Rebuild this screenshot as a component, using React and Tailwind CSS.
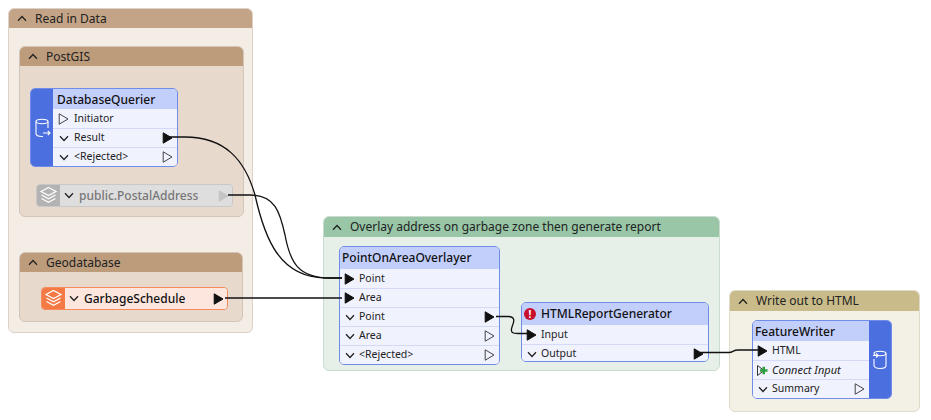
import React from "react";

const font = "font-['Noto_Sans','Open_Sans',sans-serif]";

function Chevron({ up, className = "" }) {
  return (
    <svg width="10" height="7" viewBox="0 0 10 7" className={className} fill="none" stroke="#222" strokeWidth="1.3">
      <path d={up ? "M1 5.7 L5 1.5 L9 5.7" : "M1 1.3 L5 5.5 L9 1.3"} />
    </svg>
  );
}

function Port({ filled, color = "#111" }) {
  return (
    <svg width="11" height="12" viewBox="0 0 11 12" className="shrink-0">
      <path
        d="M1.2 0.8 L10 6 L1.2 11.2 Z"
        fill={filled ? color : "#f0f2fe"}
        stroke={filled ? color : "#444"}
        strokeWidth="1"
      />
    </svg>
  );
}

function DbIcon({ writer }) {
  return (
    <svg width="17" height="20" viewBox="0 0 17 20" fill="none" stroke="#fff" strokeWidth="1.1">
      <ellipse cx="8" cy="3.5" rx="6" ry="2.2" />
      {writer ? (
        <path d="M14 3.5 V15.5 C14 17.5 11 18.5 8 18.5 C5 18.5 2 17.5 2 15.5 V9 M1 5.5 H6 M4 3.5 L6.2 5.5 L4 7.5" />
      ) : (
        <path d="M2 3.5 V15.5 C2 17.5 5 18.5 8 18.5 H9 M14 3.5 V10 M9 15 H16 M13.8 12.8 L16 15 L13.8 17.2" />
      )}
    </svg>
  );
}

function LayersIcon() {
  return (
    <svg width="19" height="19" viewBox="0 0 19 19" fill="none" stroke="#fff" strokeWidth="1.2">
      <path d="M9.5 1.5 L17 5.5 L9.5 9.5 L2 5.5 Z" />
      <path d="M2.5 9 L9.5 12.8 L16.5 9" />
      <path d="M2.5 12.5 L9.5 16.3 L16.5 12.5" />
    </svg>
  );
}

function Bookmark({ title, x, y, w, h, head, body, edge, headH = 19 }) {
  return (
    <div
      className={`absolute flex flex-col overflow-hidden rounded-[6px] border ${edge} ${body}`}
      style={{ left: x, top: y, width: w, height: h }}
    >
      <div className={`flex shrink-0 items-center gap-[8px] pl-[8px] text-[12px] text-[#222] ${head}`} style={{ height: headH }}>
        <Chevron up />
        <span>{title}</span>
      </div>
    </div>
  );
}

function Row({ label, left, right, italic, leftW = 19 }) {
  return (
    <div className="flex h-[19px] items-center border-t border-[#d3d9f6] bg-[#f0f2fe] first:border-t-0">
      <div className="flex shrink-0 justify-center" style={{ width: leftW }}>{left}</div>
      <span className={`flex-1 text-[#222] ${italic ? "italic text-[11px]" : "text-[10.5px]"}`}>{label}</span>
      <div className="mr-[4px] flex w-[11px] shrink-0 justify-center">{right}</div>
    </div>
  );
}

function Transformer({ title, x, y, w, h, rows, alert, side, sideRight, headH = 22 }) {
  return (
    <div
      className={`absolute flex overflow-hidden rounded-[5px] border border-[#6f8cea] ${sideRight ? "flex-row-reverse" : ""}`}
      style={{ left: x, top: y, width: w, height: h }}
    >
      {side && (
        <div className="flex w-[22px] shrink-0 items-center justify-center bg-[#4c6fe0]">
          <DbIcon writer={sideRight} />
        </div>
      )}
      <div className="flex min-w-0 flex-1 flex-col">
        <div
          className={`flex shrink-0 items-center gap-[5px] bg-[#c3cffb] text-[12px] font-medium text-[#111] ${side ? "pt-px" : ""} ${side && !sideRight ? "pl-[4px]" : "pl-[2px]"}`}
          style={{ height: headH }}
        >
          {alert && (
            <span className="flex h-[12px] w-[12px] items-center justify-center rounded-full bg-[#c8102e] text-[10px] font-bold leading-none text-white">!</span>
          )}
          <span>{title}</span>
        </div>
        <div className="flex flex-1 flex-col">{rows}</div>
      </div>
    </div>
  );
}

function Feature({ title, x, y, w, muted, portFilled }) {
  return (
    <div
      className={`absolute flex h-[23px] overflow-hidden rounded-[4px] border ${muted ? "border-[#c8c8c8]" : "border-[#f58a5d]"}`}
      style={{ left: x, top: y, width: w }}
    >
      <div className={`flex w-[23px] shrink-0 items-center justify-center ${muted ? "bg-[#b3b3b3]" : "bg-[#f47a45]"}`}>
        <LayersIcon />
      </div>
      <div className={`flex flex-1 items-center pl-[4px] pr-[3px] ${muted ? "bg-[#dedede]" : "bg-[#fde6dd]"}`}>
        <Chevron className="mr-[5px]" />
        <span className={`flex-1 text-[12px] font-medium ${muted ? "text-[#777]" : "text-[#111]"}`}>{title}</span>
        <Port filled color={portFilled} />
      </div>
    </div>
  );
}

function ConnectInput() {
  return (
    <svg width="13" height="13" viewBox="0 0 13 13" className="shrink-0">
      <path d="M1.5 1.5 L8 6.5 L1.5 11.5 Z" fill="#f0f2fe" stroke="#333" strokeWidth="1" />
      <path d="M6.5 2.8 H9 V5.3 H11.5 V7.8 H9 V10.3 H6.5 V7.8 H4 V5.3 H6.5 Z" fill="#2f9e3f" />
    </svg>
  );
}

export default function App() {
  return (
    <div className={`relative h-[420px] w-[931px] overflow-hidden bg-white ${font}`}>
      <Bookmark title="Read in Data" x={8} y={8} w={245} h={325} head="bg-[#c4a486]" body="bg-[#f4ede6]" edge="border-[#dcd2c8]" />
      <Bookmark title="PostGIS" x={19} y={46} w={225} h={171} head="bg-[#bd9c7c]" body="bg-[#e7dacd]" edge="border-[#d3c5b8]" />
      <Bookmark title="Geodatabase" x={19} y={252} w={224} h={70} head="bg-[#bd9c7c]" body="bg-[#e7dacd]" edge="border-[#d3c5b8]" />
      <Bookmark title="Overlay address on garbage zone then generate report" x={323} y={216} w={397} h={155} headH={20} head="bg-[#98c6a6]" body="bg-[#e6f0e9]" edge="border-[#c9dccf]" />
      <Bookmark title="Write out to HTML" x={729} y={290} w={191} h={122} headH={20} head="bg-[#c9bc8a]" body="bg-[#f3f0e5]" edge="border-[#dfdbc9]" />

      <Transformer
        title="DatabaseQuerier"
        x={30}
        y={88}
        w={148}
        h={79}
        headH={20}
        side
        rows={
          <>
            <Row label="Initiator" leftW={21} left={<Port />} />
            <Row label="Result" leftW={21} left={<Chevron />} right={<Port filled />} />
            <Row label="<Rejected>" leftW={21} left={<Chevron />} right={<Port />} />
          </>
        }
      />
      <Feature title="public.PostalAddress" x={36} y={184} w={197} muted portFilled="#c4c4c4" />
      <Feature title="GarbageSchedule" x={41} y={287} w={187} portFilled="#111" />

      <Transformer
        title="PointOnAreaOverlayer"
        x={339}
        y={246}
        w={161}
        h={119}
        rows={
          <>
            <Row label="Point" left={<Port filled />} />
            <Row label="Area" left={<Port filled />} />
            <Row label="Point" left={<Chevron />} right={<Port filled />} />
            <Row label="Area" left={<Chevron />} right={<Port />} />
            <Row label="<Rejected>" left={<Chevron />} right={<Port />} />
          </>
        }
      />
      <Transformer
        title="HTMLReportGenerator"
        x={521}
        y={302}
        w={188}
        h={60}
        alert
        rows={
          <>
            <Row label="Input" left={<Port filled />} />
            <Row label="Output" left={<Chevron />} right={<Port filled />} />
          </>
        }
      />
      <Transformer
        title="FeatureWriter"
        x={752}
        y={320}
        w={140}
        h={79}
        headH={20}
        side
        sideRight
        rows={
          <>
            <Row label="HTML" left={<Port filled />} />
            <Row label="Connect Input" italic left={<ConnectInput />} />
            <Row label="Summary" left={<Chevron />} right={<Port />} />
          </>
        }
      />

      {/* connections sit over the nodes */}
      <svg className="pointer-events-none absolute inset-0" width="931" height="420" fill="none" stroke="#111" strokeWidth="1.3">
        <path d="M170 137 H185 C225 137 245 160 255 195 C265 240 280 277 325 278 H342" />
        <path d="M228 195 H250 C275 195 280 212 285 235 C290 262 298 278 330 278 H342" />
        <path d="M225 298 H342" />
        <path d="M496 316.5 H508 C516 316.5 514 322 512 327 C510 333 513 333.5 518 333.5 H530" />
        <path d="M700 352.5 H729 C733 352.5 733 350 738 350 H762" />
      </svg>
    </div>
  );
}
